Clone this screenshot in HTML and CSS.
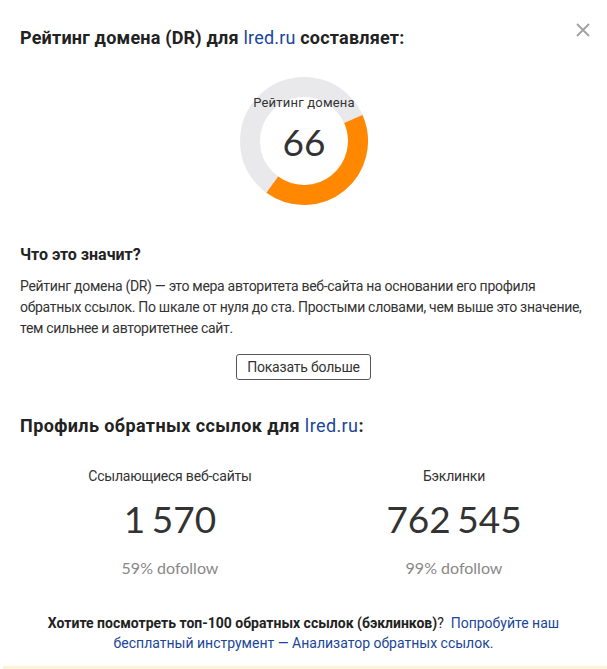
FILE: index.html
```html
<!DOCTYPE html>
<html lang="ru">
<head>
    <meta charset="UTF-8">
    <meta name="viewport" content="width=device-width, initial-scale=1.0">
    <title>Рейтинг домена</title>
    <link rel="stylesheet" href="styles.css">
</head>
<body>
    <div class="modal">
        <button class="close" aria-label="Закрыть">
            <svg width="14" height="14" viewBox="0 0 14 14"><path d="M1 1L13 13M13 1L1 13" stroke="#a0a0a0" stroke-width="1.8"/></svg>
        </button>

        <h2 class="title">Рейтинг домена (DR) для <a href="#">lred.ru</a> составляет:</h2>

        <!-- DR gauge -->
        <div class="gauge">
            <svg width="128" height="128" viewBox="0 0 128 128">
                <circle cx="64" cy="64" r="54" fill="none" stroke="#e9e9eb" stroke-width="20"/>
                <path d="M113.3 42.0 A54 54 0 0 1 32.3 107.7" fill="none" stroke="#ff8800" stroke-width="20"/>
            </svg>
            <div class="gauge-label">Рейтинг домена</div>
            <div class="gauge-value">66</div>
        </div>

        <h3 class="subtitle">Что это значит?</h3>
        <p class="text">Рейтинг домена (DR) — это мера авторитета веб-сайта на основании его профиля обратных ссылок. По шкале от нуля до ста. Простыми словами, чем выше это значение, тем сильнее и авторитетнее сайт.</p>

        <div class="more">
            <button class="more-btn">Показать больше</button>
        </div>

        <h2 class="title profile">Профиль обратных ссылок для <a href="#">lred.ru</a>:</h2>

        <div class="stats">
            <div class="stat">
                <div class="stat-label">Ссылающиеся веб-сайты</div>
                <div class="stat-value">1 570</div>
                <div class="stat-note">59% dofollow</div>
            </div>
            <div class="stat">
                <div class="stat-label">Бэклинки</div>
                <div class="stat-value">762 545</div>
                <div class="stat-note">99% dofollow</div>
            </div>
        </div>

        <div class="cta">
            <b>Хотите посмотреть топ-100 обратных ссылок (бэклинков)</b>?&nbsp; <a href="#">Попробуйте наш</a><br>
            <a href="#">бесплатный инструмент — Анализатор обратных ссылок.</a>
        </div>

        <div class="notice"></div>
    </div>
</body>
</html>
```

FILE: styles.css
```css
body { margin: 0; background: #fff; font-family: Roboto, "Noto Sans", sans-serif; color: #333; }
a { color: #1a4699; text-decoration: none; }
.modal { position: relative; width: 607px; height: 669px; overflow: hidden; padding: 26px 0 0; box-sizing: border-box; }
.close { position: absolute; top: 23px; right: 17px; border: 0; background: none; padding: 0; width: 14px; height: 14px; cursor: pointer; }
.close svg { display: block; }
.title { margin: 0 20px; font-size: 18px; font-weight: 700; color: #222; line-height: 24px; letter-spacing: 0.2px; }
.title a { font-weight: 400; }
.gauge { position: relative; width: 128px; height: 128px; margin: 27px auto 0; left: 0.5px; }
.gauge svg { display: block; }
.gauge-label { position: absolute; top: 18px; left: -20px; right: -20px; text-align: center; font-size: 13px; color: #333; letter-spacing: 0.2px; }
.gauge-value { position: absolute; top: 45px; left: 0; right: 0; text-align: center; font-family: Lato, sans-serif; font-size: 37px; color: #333; line-height: 40px; }
.subtitle { margin: 40px 20px 0; font-size: 16px; font-weight: 700; color: #222; line-height: 20px; }
.text { margin: 11px 20px 0; font-size: 14px; line-height: 21px; color: #333; letter-spacing: -0.3px; }
.more { text-align: center; margin-top: 15px; }
.more-btn { font-family: Roboto, sans-serif; font-size: 14px; color: #333; background: #fff; border: 1px solid #555; border-radius: 3px; height: 26px; padding: 0 10px; cursor: pointer; letter-spacing: -0.2px; }
.profile { margin-top: 34px; letter-spacing: 0.4px; }
.stats { display: grid; grid-template-columns: 284px 284px; margin: 28px 0 0 28px; text-align: center; }
.stat-label { font-size: 14px; color: #333; line-height: 20px; letter-spacing: -0.2px; }
.stat-value { font-family: Lato, sans-serif; font-size: 37px; color: #333; line-height: 46px; margin-top: 10px; word-spacing: -3px; }
.stat-note { font-family: Lato, sans-serif; font-size: 16px; color: #888; margin-top: 16px; }
.cta { margin: 36px 20px 0; text-align: center; font-size: 14px; line-height: 20px; color: #222; }
.notice { position: absolute; left: 3px; right: 0; top: 666px; height: 20px; background: #fdf4d6; }
```
